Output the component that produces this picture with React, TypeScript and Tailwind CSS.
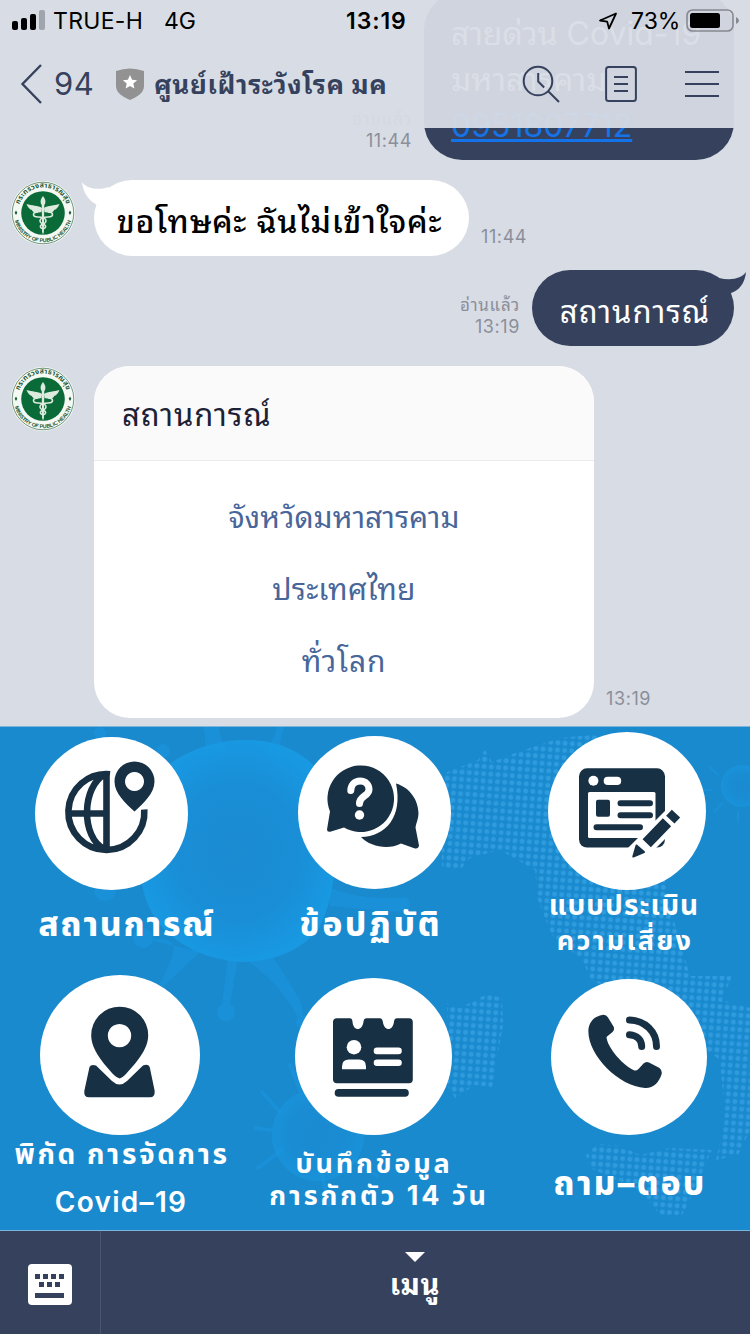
import React from "react";

const CHAT_FONT = "font-['Inter','Noto_Sans_Thai_Looped','Sarabun','Loma','Garuda','Waree','Noto_Sans_Thai','Noto_Sans',sans-serif]";
const MENU_FONT = "font-['Inter','Noto_Sans_Thai','Noto_Sans',sans-serif]";

function Avatar({ id }: { id: string }) {
  return (
    <svg viewBox="0 0 64 64" className="h-16 w-16 shrink-0">
      <defs>
        <path id={`${id}-top`} d="M8.5 40 A25 25 0 1 1 55.5 40" />
        <path id={`${id}-bottom`} d="M2.800 32 A29.200 29.200 0 0 0 61.200 32" />
      </defs>
      <circle cx="32" cy="32" r="32" fill="#f4f9f4" />
      <circle cx="32" cy="32" r="30.8" fill="none" stroke="#3b6b4c" strokeWidth="0.7" />
      <circle cx="32" cy="32" r="21.8" fill="#0b6b38" />
      <text fontSize="7" fontWeight="700" fill="#1d5a36" className="font-['Noto_Sans_Thai',sans-serif]">
        <textPath href={`#${id}-top`} startOffset="50%" textAnchor="middle" textLength="62">กระทรวงสาธารณสุข</textPath>
      </text>
      <text fontSize="5.400" fontWeight="700" fill="#1d5a36" className="font-['Liberation_Sans',sans-serif]">
        <textPath href={`#${id}-bottom`} startOffset="50%" textAnchor="middle" textLength="76">MINISTRY OF PUBLIC HEALTH</textPath>
      </text>
      <path d="M5 29.500l1.300 2.200L5 33.900l-1.300-2.200zM59 29.500l1.300 2.200-1.300 2.200-1.300-2.200z" fill="#1d5a36" />
      <g fill="#dcebdd">
        <path d="M31 27C27 24 21 25 15.500 23C17 27 19 28.500 21 29C21 31 24 32.500 30.500 31z" />
        <path d="M33 27C37 24 43 25 48.500 23C47 27 45 28.500 43 29C43 31 40 32.500 33.500 31z" />
        <path d="M32 15c2 3 3.200 5 1.800 8.500h-3.600C28.800 20 30 18 32 15z" />
        <path d="M30.700 23h2.600l-.4 28-.9 2.500-.9-2.500z" />
      </g>
      <g fill="none" stroke="#dcebdd" strokeWidth="1.600">
        <path d="M27 31c-6 0-6 5 0 5 9 0 10 5 5 7-4 2-3 4 0 5" />
        <path d="M37 31c6 0 6 5 0 5-9 0-10 5-5 7 4 2 3 4 0 5" />
      </g>
    </svg>
  );
}

function Stamp({ read, time, className }: { read?: boolean; time: string; className: string }) {
  return (
    <div className={`flex flex-col items-end text-[18px] leading-[22px] tracking-[0.6px] text-[#8b8f99] ${className}`}>
      {read && <span className="text-[17px] tracking-[0.7px]">อ่านแล้ว</span>}
      <span>{time}</span>
    </div>
  );
}

function Header() {
  return (
    <header className="absolute inset-x-0 top-0 z-10 flex h-32 flex-col bg-[#d8dce5]/95">
      <div className="flex h-10 items-center pl-3 pt-[2px] text-[23px] text-black">
        <svg viewBox="0 0 34 20" className="-mt-[2px] h-5 w-[34px]">
          <rect x="0" y="11" width="6" height="9" rx="2" />
          <rect x="9" y="8" width="6" height="12" rx="2" />
          <rect x="18" y="4" width="6" height="16" rx="2" />
          <rect x="27" y="0" width="6" height="20" rx="2" fill="#a0a4ac" />
        </svg>
        <span className="ml-[7px] w-[111px] tracking-[0.3px]">TRUE-H</span>
        <span className="w-[182px]">4G</span>
        <span className="w-[252px] font-semibold tracking-[0.9px]">13:19</span>
        <svg viewBox="0 0 20 20" className="h-5 w-5">
          <path d="M18 2.500L2 9.500l7.200 1.200L11 17.500z" fill="none" stroke="#000" strokeWidth="1.800" strokeLinejoin="round" />
        </svg>
        <span className="ml-[13px] w-[55px]">73%</span>
        <svg viewBox="0 0 54 24" className="h-6 w-[54px]">
          <rect x="1" y="1" width="46" height="21" rx="5.500" fill="none" stroke="#86898f" strokeWidth="1.600" />
          <rect x="4" y="4" width="30" height="15" rx="2.500" />
          <path d="M50 8q3 1.500 3 3.500t-3 3.500z" fill="#86898f" />
        </svg>
      </div>
      <div className="flex h-[88px] items-center pl-5 text-[#36425d]">
        <svg viewBox="0 0 24 40" className="h-10 w-6">
          <path d="M21 1L2.500 20 21 39" fill="none" stroke="currentColor" strokeWidth="2.400" />
        </svg>
        <span className="ml-[10px] w-[62px] text-[31px] tracking-[0.5px]">94</span>
        <svg viewBox="0 0 28 32" className="h-8 w-7">
          <path d="M0 3Q14-2 28 3v15c0 7-7 11-14 14C7 29 0 25 0 18z" fill="#929292" />
          <path d="M14 7l2.100 4.700 5 .5-3.800 3.400 1.100 5-4.400-2.600-4.400 2.600 1.100-5-3.800-3.400 5-.5z" fill="#fff" />
        </svg>
        <span className="ml-[10px] w-[367px] text-[26px] font-bold tracking-[0.7px]">ศูนย์เฝ้าระวังโรค มค</span>
        <svg viewBox="0 0 38 38" className="ml-[1px] h-[38px] w-[38px]" fill="none" stroke="currentColor" strokeWidth="2">
          <circle cx="16" cy="16" r="14.300" />
          <path d="M26 26l11 11M16.200 8v8.500l6 6" />
        </svg>
        <svg viewBox="0 0 32 36" className="ml-[45px] h-9 w-8" fill="none" stroke="currentColor" strokeWidth="2">
          <rect x="1.100" y="1.100" width="29.800" height="33.800" rx="2.500" />
          <path d="M9 11h14M9 18h14M9 25h14" />
        </svg>
        <svg viewBox="0 0 34 28" className="ml-12 h-7 w-[34px]" stroke="currentColor" strokeWidth="2">
          <path d="M0 2h34M0 14h34M0 26h34" />
        </svg>
      </div>
    </header>
  );
}

function Chat() {
  return (
    <section className="flex h-[726px] shrink-0 flex-col">
      <div className="flex h-40 items-end justify-end pr-4">
        <Stamp read time="11:44" className="mb-2 mr-3" />
        <div className="h-[168px] w-[310px] shrink-0 rounded-[38px] bg-[#36425d] pl-[27px] pt-[19px] text-[32px] leading-[46px] text-white">
          <div>สายด่วน Covid-19</div>
          <div>มหาสารคาม</div>
          <div className="text-[#1573ea] underline underline-offset-[2px]">0951807712</div>
        </div>
      </div>

      <div className="mt-5 flex pl-[11px]">
        <div className="pt-[1px]"><Avatar id="seal-a" /></div>
        <div className="relative ml-[19px] flex h-[76px] w-[375px] items-center justify-center rounded-[38px] bg-white pr-1 pt-2 text-[32px] font-medium tracking-[0.7px] text-black">
          <svg viewBox="0 0 34 30" className="absolute -left-[12px] top-[1px] h-[30px] w-[34px]">
            <path d="M0 1C4 7 14 10 27 6L30 24 15 24C8 20 1 13 0 1z" fill="#fff" />
          </svg>
          <span className="relative">ขอโทษค่ะ ฉันไม่เข้าใจค่ะ</span>
        </div>
        <Stamp time="11:44" className="ml-3 mt-[46px]" />
      </div>

      <div className="mt-[14px] flex justify-end pr-4">
        <Stamp read time="13:19" className="mr-3 mt-6" />
        <div className="relative flex h-[76px] w-[202px] items-center justify-center rounded-[38px] bg-[#36425d] pl-1 pt-2 text-[31px] tracking-[1px] text-white">
          <svg viewBox="0 0 34 30" className="absolute -right-[12px] top-[1px] h-[30px] w-[34px]">
            <path d="M34 1C30 7 20 10 7 7L4 24 19 22C26 20 33 13 34 1z" fill="#36425d" />
          </svg>
          <span className="relative">สถานการณ์</span>
        </div>
      </div>

      <div className="mt-5 flex pl-[11px]">
        <div className="pt-[1px]"><Avatar id="seal-b" /></div>
        <div className="ml-[19px] flex h-[352px] w-[500px] flex-col overflow-hidden rounded-[36px] bg-white text-[30px]">
          <div className="flex h-[95px] items-center border-b border-[#ececee] bg-[#fafafa] pl-7 pt-1 text-[31px] tracking-[0.9px] text-[#1c2236]">สถานการณ์</div>
          <div className="flex flex-col items-center pt-[20px] leading-[72px] text-[#48669a]">
            <span>จังหวัดมหาสารคาม</span>
            <span className="tracking-[0.2px]">ประเทศไทย</span>
            <span className="tracking-[0.8px]">ทั่วโลก</span>
          </div>
        </div>
        <Stamp time="13:19" className="ml-3 mt-[322px]" />
      </div>
    </section>
  );
}

function Backdrop() {
  return (
    <svg viewBox="0 726 750 505" className="absolute inset-0 h-full w-full">
      <defs>
        <pattern id="dots" width="7.200" height="7.200" patternUnits="userSpaceOnUse" patternTransform="rotate(4)">
          <circle cx="3.600" cy="3.600" r="2.400" fill="#41aaea" />
        </pattern>
        <radialGradient id="virus">
          <stop offset="0" stopColor="#1b8bd2" />
          <stop offset="0.600" stopColor="#198fd8" />
          <stop offset="1" stopColor="#179ce6" />
        </radialGradient>
      </defs>
      <g opacity="0.300" fill="#17a0ea">
        <path d="M203 726Q208 745 202 760L232 752Q220 745 219 726zM277 726Q272 745 262 755L284 766Q276 745 285 726z" />
        <path d="M150 940Q180 935 172 958Q158 990 152 997Q170 980 200 952zM228 958L222 1004A9 9 0 1 0 230 1004L238 958zM244 958Q282 985 298 1018Q306 1020 300 1000Q285 975 268 950z" />
        <path d="M326 886Q360 902 406 897Q414 904 406 912Q370 910 330 906z" />
        <circle cx="163" cy="751" r="7" />
        <circle cx="303" cy="1022" r="7" />
        <circle cx="105" cy="890" r="11" />
        <circle cx="143" cy="938" r="10" />
        <circle cx="100" cy="733" r="6" />
      </g>
      <g opacity="0.300" stroke="#17a0ea" fill="none" strokeLinecap="round">
        <path d="M322 1175l7 30M282 1150l-24 18M280 1112L262 1092M300 1090l-10-25M355 1160l22 16M270 1130l-14-2" strokeWidth="4" />
        <path d="M718 775l-8-8M712 790h-10M722 803l-7 8M738 812v10" strokeWidth="2" />
      </g>
      <path d="M168 765Q200 742 240 740Q290 738 318 770Q338 800 336 850Q334 900 318 930Q290 962 240 962Q190 958 160 925Q136 895 140 840Q142 790 168 765z" fill="url(#virus)" opacity="0.800" />
      <circle cx="318" cy="1135" r="46" fill="url(#virus)" opacity="0.450" />
      <circle cx="742" cy="786" r="21" fill="url(#virus)" opacity="0.500" />
      <g fill="url(#dots)" opacity="0.550">
        <path d="M440 775L478 760 485 750 492 762 515 753 560 738 600 734 650 780 668 900 690 976 732 976 722 1000 750 1008V1130L738 1155 716 1160 725 1120 720 1060 640 1000 590 980 583 960 552 935 538 900 535 870 500 850 470 858 460 870 442 868z" />
        <path d="M447 1003L460 1008 487 994 502 998 503 1025 492 1088 475 1085 455 1098 447 1085z" />
        <path d="M586 1155L597 1144 620 1146 640 1155 670 1148 712 1150 705 1165 695 1190 682 1215 660 1215 640 1190 590 1168z" />
      </g>
      <path d="M0 726.500H750M0 1230.500H750" stroke="#7cb5dc" />
    </svg>
  );
}

const INK = "#173044";

const globe = (
  <g>
    <path d="M110 774.700A38 38 0 1 0 144.300 810M106.500 773v78M68 814h38M105 775C82 786 80 838 105 850" fill="none" stroke={INK} strokeWidth="6.600" />
    <path fillRule="evenodd" fill={INK} d="M134.500 812C126 804 114.500 794 114.500 782a20 20 0 0 1 40 0C154.500 794 143 804 134.500 812zM134.500 772.500a9.500 9.500 0 1 0 .01 0z" />
  </g>
);
const question = (
  <g fill={INK}>
    <path d="M327 830L330 812A33.300 33.300 0 1 1 344 828L331 832Q327 833 327 830z" />
    <path d="M396 784C410 788 418.500 801 418.500 814C418.500 819 416 824 415.500 828L419 846Q418.500 849.500 415 849L401 844C388 851 370 847 361 837.500C386 837 403 817 396 784z" />
    <path d="M350.800 791C351 785 355 781.500 360 781.500C366 781.500 369 785.500 369 790C369 797 359.500 796 359.500 804" fill="none" stroke="#fff" strokeWidth="7" strokeLinecap="round" />
    <circle cx="359.500" cy="815.500" r="4.700" fill="#fff" />
  </g>
);
const form = (
  <g fill={INK}>
    <rect x="579" y="768.300" width="86" height="79.200" rx="8" />
    <rect x="588" y="792" width="67.500" height="46" rx="1.500" fill="#fff" />
    <circle cx="593.400" cy="780.700" r="5" fill="#fff" />
    <rect x="603.700" y="776.700" width="17.500" height="8.300" rx="4.100" fill="#fff" />
    <rect x="596" y="799.700" width="14" height="17" rx="2" />
    <path d="M620.500 803.300H650M620.500 815.200H650M596.500 827.200H640" stroke={INK} strokeWidth="6" strokeLinecap="round" />
    <path d="M630 860L678 812" stroke="#fff" strokeWidth="20" />
    <path d="M667 822.300L646.700 843.300M676 813.600L670.300 819.600" stroke={INK} strokeWidth="11.500" />
    <path d="M636.500 845.500L644 852 633.300 856.500z" stroke={INK} strokeWidth="2" strokeLinejoin="round" />
  </g>
);
const place = (
  <g fill={INK}>
    <path fillRule="evenodd" d="M119.700 1078.500Q117 1078 114 1075C104 1064 91.200 1050 91.200 1035.200a28.500 28.500 0 0 1 57 0C148.200 1050 135 1064 125 1075Q122 1078 119.700 1078.500zM119.500 1023.900a11.700 11.700 0 1 0 .01 0z" />
    <path d="M89.500 1067Q91 1064 96 1065.500L112 1081Q119.500 1088 127 1081L143 1065.500Q148 1063.500 149.700 1067L154.700 1091Q155 1097.300 150 1097.300H89Q83.700 1097.300 84.300 1091z" />
  </g>
);
const card = (
  <g fill={INK}>
    <path d="M337 1018.700H350Q352 1018.700 352.500 1022C353 1032 362.500 1032 363.500 1022Q364 1018.700 366.500 1018.700H380Q382 1018.700 382.800 1022C384 1032 393 1032 394 1022Q394.500 1018.700 397 1018.700H409Q412.800 1018.700 412.800 1022.500V1080Q412.800 1083.700 409 1083.700H337Q333 1083.700 333 1080V1022.500Q333 1018.700 337 1018.700z" />
    <circle cx="354" cy="1047.700" r="7.300" fill="#fff" />
    <path d="M342 1069.700V1067Q342 1060 349 1060H359Q366 1060 366 1067V1069.700z" fill="#fff" />
    <path d="M377 1051.400H398.500M377 1063.200H398.500" stroke="#fff" strokeWidth="6.600" strokeLinecap="round" />
    <path d="M338.500 1093.400H405" stroke={INK} strokeWidth="7.600" strokeLinecap="round" />
  </g>
);
const phone = (
  <g fill={INK}>
    <path d="M588.500 1028C590 1020 595 1016 602 1014.500Q606 1013.500 608 1017L613.500 1026Q615 1029 612.500 1031.500L606.500 1036.500C607 1047 624 1066 634.500 1070Q636.500 1070.500 638.500 1068.500L643.500 1063Q646 1060.500 649 1062L659.500 1067.500Q662.500 1070 661.500 1074C659 1082 653 1088 645 1087.500C618 1086 586 1053 588.500 1028z" />
    <path d="M629.500 1019.500C645 1020 656.500 1031 656.500 1046M629.500 1034.300C637 1035 641.700 1039 641.700 1046" fill="none" stroke={INK} strokeWidth="7" strokeLinecap="round" />
  </g>
);

interface Tile {
  key: string;
  icon: React.ReactNode;
  viewBox: string;
  cell: string;
  disc: string;
  lines: { text: string; className: string }[];
}

const TILES: Tile[] = [
  { key: "status", icon: globe, viewBox: "35 737.500 153 153", cell: "pt-[11px] pr-[27px]", disc: "size-[153px]", lines: [{ text: "สถานการณ์", className: "mt-[14px] ml-[31px] text-[33px] font-extrabold tracking-[1.9px]" }] },
  { key: "practice", icon: question, viewBox: "298 736.500 153 153", cell: "pt-[10px] pr-[1px]", disc: "size-[153px]", lines: [{ text: "ข้อปฏิบัติ", className: "mt-[15px] -ml-[7px] text-[33px] font-extrabold tracking-[3px]" }] },
  { key: "assess", icon: form, viewBox: "548 732 158 158", cell: "pt-[6px] pl-[4px]", disc: "size-[158px]", lines: [{ text: "แบบประเมิน", className: "-mt-[5px] -ml-[6px] text-[28px] font-bold tracking-[1px]" }, { text: "ความเสี่ยง", className: "-mt-[4px] -ml-[4px] text-[27px] font-bold tracking-[2.3px]" }] },
  { key: "places", icon: place, viewBox: "40 975 160 160", cell: "pt-[10px] pr-[10px]", disc: "size-[160px]", lines: [{ text: "พิกัด การจัดการ", className: "-mt-[1px] ml-[4px] text-[28px] font-bold tracking-[2.6px]" }, { text: "Covid–19", className: "mt-[8px] ml-[2px] text-[28px] font-semibold tracking-[1.3px]" }] },
  { key: "log", icon: card, viewBox: "295 978.500 157 157", cell: "pt-[13px] pr-[3px]", disc: "size-[157px]", lines: [{ text: "บันทึกข้อมูล", className: "mt-[9px] ml-[1px] text-[27px] font-bold tracking-[2.8px]" }, { text: "การกักตัว 14 วัน", className: "-mt-[8px] ml-[11px] text-[27px] font-bold tracking-[2.9px]" }] },
  { key: "ask", icon: phone, viewBox: "551 978.500 156 156", cell: "pt-[14px] pl-[8px]", disc: "size-[156px]", lines: [{ text: "ถาม–ตอบ", className: "mt-[28px] ml-[2px] text-[33px] font-extrabold tracking-[2.4px]" }] },
];

function RichMenu() {
  return (
    <section className={`relative h-[505px] shrink-0 bg-[#1a8acf] ${MENU_FONT}`}>
      <Backdrop />
      <div className="relative grid h-full grid-cols-3 grid-rows-[239px_266px]">
        {TILES.map((t) => (
          <div key={t.key} className={`flex flex-col items-center ${t.cell}`}>
            <svg viewBox={t.viewBox} className={`shrink-0 rounded-full bg-white ${t.disc}`}>{t.icon}</svg>
            {t.lines.map((l) => (
              <span key={l.text} className={`whitespace-nowrap leading-10 text-white ${l.className}`}>{l.text}</span>
            ))}
          </div>
        ))}
      </div>
    </section>
  );
}

function BottomBar() {
  return (
    <footer className="flex h-[103px] shrink-0 bg-[#36425d]">
      <div className="flex w-[101px] items-center justify-center border-r border-[#4a556e] pt-1">
        <svg viewBox="0 0 44 41" className="h-[41px] w-11">
          <rect width="44" height="41" rx="4" fill="#fff" />
          <path d="M7 12.500h5M15 12.500h5M23 12.500h5M31 12.500h5M11 20.500h5M19 20.500h5M27 20.500h5M7 31.500h29" stroke="#36425d" strokeWidth="5" />
        </svg>
      </div>
      <div className="flex w-[628px] flex-col items-center pt-[21px] text-white">
        <svg viewBox="0 0 20 10" className="h-2.5 w-5"><path d="M0 0h20L10 10z" fill="#fff" /></svg>
        <span className="mt-[3px] text-[29px] font-bold leading-10 tracking-[0.6px]">เมนู</span>
      </div>
    </footer>
  );
}

export default function App() {
  return (
    <main className={`relative flex h-[1334px] w-[750px] flex-col overflow-hidden whitespace-nowrap bg-[#d8dce5] ${CHAT_FONT}`}>
      <Header />
      <Chat />
      <RichMenu />
      <BottomBar />
    </main>
  );
}
